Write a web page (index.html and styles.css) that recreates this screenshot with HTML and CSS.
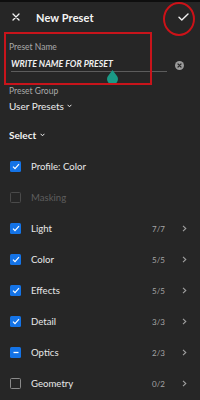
FILE: index.html
```html
<!DOCTYPE html>
<html>
<head>
<meta charset="utf-8">
<link rel="stylesheet" href="styles.css">
</head>
<body>
<div class="screen">
  <header class="header">
    <svg class="close" width="8" height="8" viewBox="0 0 8 8"><path d="M1 1L7 7M7 1L1 7" stroke="#f2f2f2" stroke-width="1.3" stroke-linecap="round"/></svg>
    <h1 class="title">New Preset</h1>
    <svg class="confirm" width="11" height="8" viewBox="0 0 11 8"><path d="M1 4.3L3.8 7L10 1" fill="none" stroke="#f2f2f2" stroke-width="1.4" stroke-linecap="round" stroke-linejoin="round"/></svg>
    <span class="ring"></span>
  </header>

  <section class="form">
    <div class="label">Preset Name</div>
    <div class="name-row">
      <div class="name-input">WRITE NAME FOR PRESET</div>
      <svg class="clear" width="9" height="9" viewBox="0 0 9 9"><circle cx="4.5" cy="4.5" r="4.5" fill="#9b9b9b"/><path d="M3 3L6 6M6 3L3 6" stroke="#2a2a2a" stroke-width="1.2" stroke-linecap="round"/></svg>
    </div>
    <span class="highlight"></span>
    <svg class="handle" width="11" height="13" viewBox="0 0 11 13"><path d="M5.5 0L9.4 5.2A5.5 5.5 0 1 1 1.6 5.2Z" fill="#1a9a86"/></svg>

    <div class="label group-label">Preset Group</div>
    <div class="dropdown">User Presets <svg width="5" height="4" viewBox="0 0 5 4"><path d="M0.6 0.8L2.5 2.8L4.4 0.8" fill="none" stroke="#e8e8e8" stroke-width="1"/></svg></div>

    <div class="select">Select <svg width="5" height="4" viewBox="0 0 5 4"><path d="M0.6 0.8L2.5 2.8L4.4 0.8" fill="none" stroke="#f0f0f0" stroke-width="1"/></svg></div>
  </section>

  <ul class="list">
    <li class="row"><span class="box on"><svg width="8" height="7" viewBox="0 0 8 7"><path d="M1 3.6L3 5.6L7 1.2" fill="none" stroke="#fff" stroke-width="1.2"/></svg></span><span class="name">Profile: Color</span></li>
    <li class="row disabled"><span class="box off"></span><span class="name">Masking</span></li>
    <li class="row"><span class="box on"><svg width="8" height="7" viewBox="0 0 8 7"><path d="M1 3.6L3 5.6L7 1.2" fill="none" stroke="#fff" stroke-width="1.2"/></svg></span><span class="name">Light</span><span class="count">7/7</span><svg class="chev" width="5" height="7" viewBox="0 0 5 7"><path d="M1 0.8L3.8 3.5L1 6.2" fill="none" stroke="#a0a0a0" stroke-width="1.1"/></svg></li>
    <li class="row"><span class="box on"><svg width="8" height="7" viewBox="0 0 8 7"><path d="M1 3.6L3 5.6L7 1.2" fill="none" stroke="#fff" stroke-width="1.2"/></svg></span><span class="name">Color</span><span class="count">5/5</span><svg class="chev" width="5" height="7" viewBox="0 0 5 7"><path d="M1 0.8L3.8 3.5L1 6.2" fill="none" stroke="#a0a0a0" stroke-width="1.1"/></svg></li>
    <li class="row"><span class="box on"><svg width="8" height="7" viewBox="0 0 8 7"><path d="M1 3.6L3 5.6L7 1.2" fill="none" stroke="#fff" stroke-width="1.2"/></svg></span><span class="name">Effects</span><span class="count">5/5</span><svg class="chev" width="5" height="7" viewBox="0 0 5 7"><path d="M1 0.8L3.8 3.5L1 6.2" fill="none" stroke="#a0a0a0" stroke-width="1.1"/></svg></li>
    <li class="row"><span class="box on"><svg width="8" height="7" viewBox="0 0 8 7"><path d="M1 3.6L3 5.6L7 1.2" fill="none" stroke="#fff" stroke-width="1.2"/></svg></span><span class="name">Detail</span><span class="count">3/3</span><svg class="chev" width="5" height="7" viewBox="0 0 5 7"><path d="M1 0.8L3.8 3.5L1 6.2" fill="none" stroke="#a0a0a0" stroke-width="1.1"/></svg></li>
    <li class="row"><span class="box on"><svg width="8" height="7" viewBox="0 0 8 7"><path d="M1.5 3.5H6.5" fill="none" stroke="#fff" stroke-width="1.3"/></svg></span><span class="name">Optics</span><span class="count">2/3</span><svg class="chev" width="5" height="7" viewBox="0 0 5 7"><path d="M1 0.8L3.8 3.5L1 6.2" fill="none" stroke="#a0a0a0" stroke-width="1.1"/></svg></li>
    <li class="row"><span class="box empty"></span><span class="name">Geometry</span><span class="count">0/2</span><svg class="chev" width="5" height="7" viewBox="0 0 5 7"><path d="M1 0.8L3.8 3.5L1 6.2" fill="none" stroke="#a0a0a0" stroke-width="1.1"/></svg></li>
  </ul>
</div>
</body>
</html>
```

FILE: styles.css
```css
* { box-sizing: border-box; margin: 0; padding: 0; }
html, body { width: 200px; height: 400px; overflow: hidden; background: #262626; }
body { font-family: Lato, "Open Sans", sans-serif; color: #e6e6e6; }
.screen { border-top: 2px solid #0e0e0e; height: 400px; position: relative; }

.header { height: 30px; display: flex; align-items: center; padding-left: 12px; position: relative; }
.close { display: block; }
.title { font-size: 11px; font-weight: 700; color: #f4f4f4; margin-left: 16px; letter-spacing: 0.1px; }
.confirm { display: block; margin-left: auto; margin-right: 11px; }
.ring { position: absolute; left: 163px; top: 0; width: 32px; height: 34px; border: 2px solid #cc1218; border-radius: 50%; }

.form { padding: 9px 0 0 9px; position: relative; }
.label { font-size: 8.5px; line-height: 12px; color: #a9a9a9; }
.name-row { display: flex; align-items: center; padding-top: 5px; }
.name-input { width: 156px; margin-left: 2px; font-size: 8.8px; line-height: 12px; font-weight: 700; font-style: italic; color: #f0f0f0; border-bottom: 1px solid #5c5c5c; padding-bottom: 1px; }
.clear { display: block; margin-left: 8px; }
.highlight { position: absolute; left: 4px; top: 0; width: 148px; height: 53px; border: 2px solid #c8141b; }
.handle { position: absolute; left: 107px; top: 38px; }

.group-label { margin-top: 13px; }
.dropdown { font-size: 10px; line-height: 12px; margin-top: 3px; color: #ececec; display: flex; align-items: center; gap: 3px; }
.select { font-size: 10px; line-height: 12px; font-weight: 700; margin-top: 17px; color: #f2f2f2; display: flex; align-items: center; gap: 4px; }

.list { list-style: none; margin-top: 10px; }
.row { height: 31px; display: flex; align-items: center; padding-left: 10px; font-size: 9.6px; }
.box { width: 11px; height: 11px; border-radius: 1.5px; display: flex; align-items: center; justify-content: center; flex: none; }
.box.on { background: #1473e6; }
.box.off { border: 1.5px solid #4a4a4a; }
.box.empty { border: 1.5px solid #8a8a8a; }
.name { margin-left: 10px; color: #e8e8e8; }
.disabled .name { color: #5e5e5e; }
.count { margin-left: auto; font-size: 8px; color: #a5a5a5; width: 20px; text-align: right; }
.chev { display: block; margin-left: 17px; margin-right: 13px; }
```
